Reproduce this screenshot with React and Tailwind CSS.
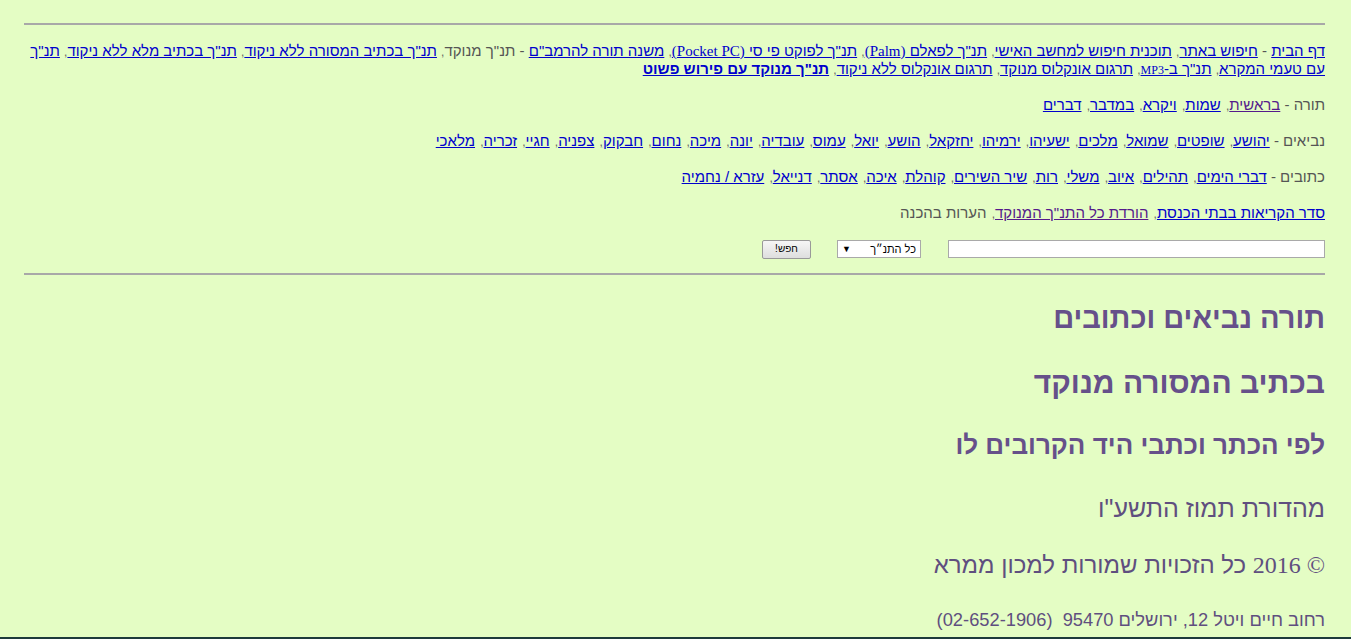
import React from 'react';

// ספרי התנ"ך לשורות הניווט
const torah = ['בראשית', 'שמות', 'ויקרא', 'במדבר', 'דברים'];
const neviim = ['יהושע', 'שופטים', 'שמואל', 'מלכים', 'ישעיהו', 'ירמיהו', 'יחזקאל', 'הושע', 'יואל', 'עמוס', 'עובדיה', 'יונה', 'מיכה', 'נחום', 'חבקוק', 'צפניה', 'חגיי', 'זכריה', 'מלאכי'];
const ketuvim = ['דברי הימים', 'תהילים', 'איוב', 'משלי', 'רות', 'שיר השירים', 'קוהלת', 'איכה', 'אסתר', 'דנייאל', 'עזרא / נחמיה'];

const Link = ({ children, visited, bold }) => (
    <a href="#" className={`underline ${visited ? 'text-[#551a8b]' : 'text-[#0000cc]'} ${bold ? 'font-bold' : ''}`}>
        {children}
    </a>
);

// פסיק קטן ואפור בין הקישורים
const Comma = ({ tight }) => (
    <>
        <span className={`text-[12px] leading-none text-[#666] ${tight ? '' : 'pl-[1px]'}`}>,</span>{' '}
    </>
);

const BookRow = ({ title, books, visitedIdx }) => (
    <p className="mb-[18px]">
        {title} -{' '}
        {books.map((b, i) => (
            <React.Fragment key={b}>
                <Link visited={i === visitedIdx}>{b}</Link>
                {i < books.length - 1 && <Comma />}
            </React.Fragment>
        ))}
    </p>
);

export default function App() {
    return (
        <div
            dir="rtl"
            className="h-[639px] overflow-hidden bg-[#e4fdc4] pl-[24px] pr-[26px] pt-[23px] border-b-2 border-[#1d3b3b] text-[15px] leading-[18px] text-[#555]"
            style={{ fontFamily: '"Liberation Sans", Arial, "DejaVu Sans", sans-serif' }}
        >
            <hr className="border-0 border-t-2 border-[#a8a8a8]" />

            {/* ניווט עליון */}
            <div className="pt-[17px]">
                <p className="mb-[18px]">
                    <Link>דף הבית</Link> - <Link>חיפוש באתר</Link><Comma tight />
                    <Link>תוכנית חיפוש למחשב האישי</Link><Comma tight />
                    <Link>תנ"ך לפאלם <span style={{ fontFamily: '"Liberation Serif", serif' }}>(Palm)</span></Link><Comma tight />
                    <Link>תנ"ך לפוקט פי סי <span style={{ fontFamily: '"Liberation Serif", serif' }}>(Pocket PC)</span></Link><Comma tight />
                    <Link>משנה תורה להרמב"ם</Link> - תנ"ך מנוקד<Comma tight />
                    <Link>תנ"ך בכתיב המסורה ללא ניקוד</Link><Comma tight />
                    <Link>תנ"ך בכתיב מלא ללא ניקוד</Link><Comma tight />
                    <Link>תנ"ך עם טעמי המקרא</Link><Comma tight />
                    <Link>תנ"ך ב-<span className="text-[12px] leading-none" style={{ fontFamily: '"Liberation Serif", serif' }}>MP3</span></Link><Comma tight />
                    <Link>תרגום אונקלוס מנוקד</Link><Comma tight />
                    <Link>תרגום אונקלוס ללא ניקוד</Link><Comma tight />
                    <Link bold>תנ"ך מנוקד עם פירוש פשוט</Link>
                </p>
                <BookRow title="תורה" books={torah} visitedIdx={0} />
                <BookRow title="נביאים" books={neviim} />
                <BookRow title="כתובים" books={ketuvim} />
                <p className="mb-[17px]">
                    <Link>סדר הקריאות בבתי הכנסת</Link><Comma />
                    <Link visited>הורדת כל התנ"ך המנוקד</Link><Comma />
                    הערות בהכנה
                </p>
            </div>

            {/* טופס חיפוש */}
            <div className="flex items-center h-[20px]">
                <input type="text" className="w-[377px] h-[18px] bg-white border border-[#a9a9a9]" />
                <div className="mr-[27px] w-[84px] h-[18px] bg-white border border-[#a9a9a9] flex items-center justify-between px-[4px] text-[11px] leading-none text-black">
                    <span>כל התנ״ך</span>
                    <span className="text-[9px]">▼</span>
                </div>
                <button className="mr-[26px] w-[49px] h-[19px] rounded-[2px] border border-[#999] bg-gradient-to-b from-[#f6f6f6] to-[#dedede] text-[10px] text-black leading-none">
                    חפש!
                </button>
            </div>

            <hr className="mt-[14px] border-0 border-t-2 border-[#a8a8a8]" />

            {/* כותרות */}
            <div className="text-[#66508a] pt-[21px]">
                <h1 className="text-[29px] font-bold leading-[44px]">תורה נביאים וכתובים</h1>
                <h2 className="mt-[21px] text-[30px] font-bold leading-[44px]">בכתיב המסורה מנוקד</h2>
                <h3 className="mt-[20px] text-[26px] font-bold leading-[40px]">לפי הכתר וכתבי היד הקרובים לו</h3>
                <p className="mt-[27px] text-[25px] leading-[32px] text-[#5f4f7f]">מהדורת תמוז התשע"ו</p>
                <p className="mt-[25px] text-[24px] leading-[32px] text-[#5f4f7f]">
                    <span style={{ fontFamily: '"Liberation Serif", serif' }}>© 2016</span> כל הזכויות שמורות למכון ממרא
                </p>
                <p className="mt-[26px] text-[18.3px] leading-[26px] text-[#5f4f7f]">
                    רחוב חיים ויטל 12, ירושלים 95470&nbsp; (02-652-1906)
                </p>
            </div>
        </div>
    );
}
